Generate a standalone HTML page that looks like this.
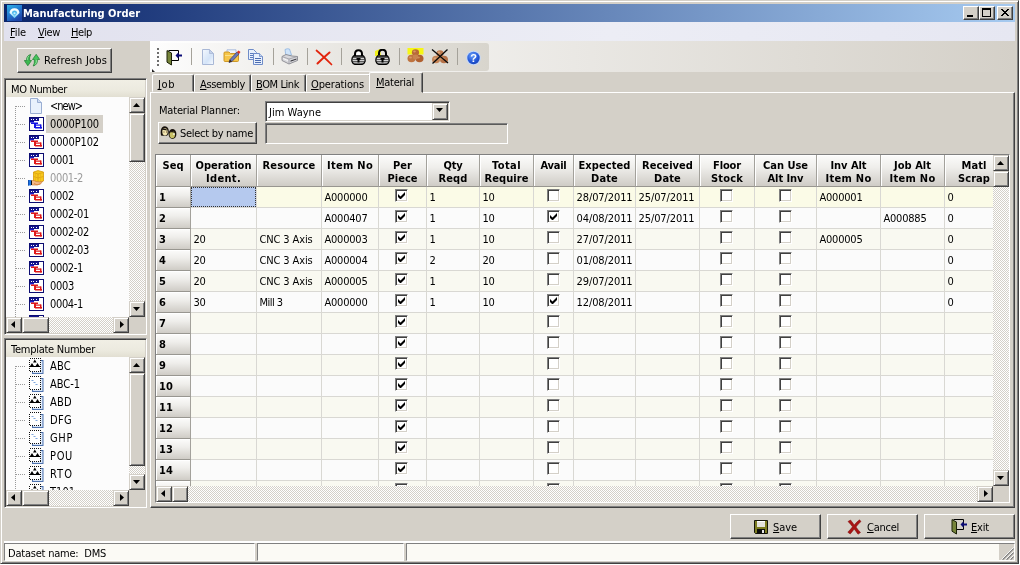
<!DOCTYPE html>
<html><head><meta charset="utf-8"><title>Manufacturing Order</title>
<style>
*{box-sizing:border-box;margin:0;padding:0}
html,body{width:1020px;height:565px;overflow:hidden;background:#fff}
body{position:relative;font:11px "DejaVu Sans Condensed","Liberation Sans",sans-serif;color:#000;-webkit-font-smoothing:antialiased}
#w{position:absolute;left:0;top:0;width:1020px;height:565px;will-change:transform}
.a{position:absolute}
.t{position:absolute;white-space:pre;line-height:13px;height:13px}
.b{font-weight:bold;font-family:"DejaVu Sans Condensed","Liberation Sans",sans-serif;font-size:11px}
u{text-decoration:underline;text-underline-offset:1px;text-decoration-skip-ink:none}
.btn{position:absolute;background:#d4d0c8;border:1px solid;border-color:#fff #404040 #404040 #fff;box-shadow:inset -1px -1px 0 #808080,inset 1px 1px 0 #d4d0c8}
.sunk{position:absolute;border:1px solid;border-color:#808080 #fff #fff #808080;box-shadow:inset 1px 1px 0 #404040,inset -1px -1px 0 #d4d0c8}
.sb{position:absolute;background:#d4d0c8;border:1px solid;border-color:#d4d0c8 #404040 #404040 #d4d0c8;box-shadow:inset 1px 1px 0 #fff,inset -1px -1px 0 #808080}
.trk{position:absolute;background:#d4d0c8 conic-gradient(#fff 25%,#d4d0c8 0 50%,#fff 0 75%,#d4d0c8 0) 0 0/2px 2px}
.hdr{position:absolute;background:linear-gradient(#fcfcfb,#efeeeb 40%,#cfccc6);border-right:1px solid #a3a19b;border-bottom:1px solid #989690;box-shadow:inset 1px 1px 0 #fff}
.hdr span{position:absolute;left:0;right:0;text-align:center;white-space:pre;font:bold 11px/14px "DejaVu Sans Condensed","Liberation Sans",sans-serif}
.cell{position:absolute;border-right:1px solid #d9d8d3;border-bottom:1px solid #d9d8d3;overflow:hidden}
.cell span{position:absolute;left:2.5px;top:4px;white-space:pre;line-height:13px}
.ls{letter-spacing:-0.3px}
.cb{position:absolute;width:13px;height:13px;background:#fff;border:1px solid;border-color:#808080 #fff #fff #808080;box-shadow:inset 1px 1px 0 #404040,inset -1px -1px 0 #d4d0c8}
</style></head>
<body>
<div id="w">
<div class="a" style="left:0;top:0;width:1019px;height:564px;background:#d4d0c8;border:1px solid;border-color:#d4d0c8 #404040 #404040 #d4d0c8;box-shadow:inset 1px 1px 0 #fff,inset -1px -1px 0 #808080"></div>
<div class="a" style="left:4px;top:4px;width:1011px;height:18px;background:linear-gradient(90deg,#0a246a,#a6caf0)"></div>
<svg class="a" style="left:7px;top:5px" width="15" height="16" viewBox="0 0 15 16"><defs><linearGradient id="ig" x1="0" y1="0" x2=".6" y2="1"><stop offset="0" stop-color="#2fb2e6"/><stop offset=".55" stop-color="#2478d0"/><stop offset="1" stop-color="#1c44a8"/></linearGradient><linearGradient id="ih" x1="0" y1="0" x2="0" y2="1"><stop offset="0" stop-color="#ffffff"/><stop offset=".45" stop-color="#e8faff"/><stop offset="1" stop-color="#58c8f4"/></linearGradient></defs><rect width="15" height="16" fill="url(#ig)"/><path d="M2.500 8 Q2.800 3.300 7.500 3.300 Q12.200 3.300 12.500 8 L7.500 13.200 Z" fill="url(#ih)"/><path d="M4.800 8 Q5.200 5.600 7.500 5.600 Q9.800 5.600 10.200 8 L7.500 10.800 Z" fill="#4ab8ee"/><path d="M6.200 8.200 Q6.500 7.200 7.500 7.200 Q8.500 7.200 8.800 8.200 L7.500 9.600Z" fill="#c8f2ff"/></svg>
<div class="t b" style="left:23px;top:7px;color:#fff;">Manufacturing Order</div>
<div class="btn" style="left:963px;top:6px;width:16px;height:14px"></div>
<div class="btn" style="left:979px;top:6px;width:16px;height:14px"></div>
<div class="btn" style="left:997px;top:6px;width:16px;height:14px"></div>
<div class="a" style="left:967px;top:15px;width:6px;height:2px;background:#000"></div>
<div class="a" style="left:982px;top:8px;width:9px;height:9px;border:1px solid #000;border-top-width:2px"></div>
<svg class="a" style="left:1001px;top:9px" width="8" height="7" shape-rendering="crispEdges"><path d="M0 0h2v1h-2z M6 0h2v1h-2z M1 1h2v1h-2z M5 1h2v1h-2z M2 2h4v1h-4z M3 3h2v1h-2z M2 4h4v1h-4z M1 5h2v1h-2z M5 5h2v1h-2z M0 6h2v1h-2z M6 6h2v1h-2z" fill="#000"/></svg>
<div class="a" style="left:4px;top:22px;width:1011px;height:19px;background:linear-gradient(90deg,#e1e1ee,#ecedf5 60%,#e6e7f2)"></div>
<div class="t" style="left:10px;top:26px;letter-spacing:-0.12px;"><u>F</u>ile</div>
<div class="t" style="left:38px;top:26px;letter-spacing:-0.37px;"><u>V</u>iew</div>
<div class="t" style="left:71px;top:26px;letter-spacing:-0.39px;"><u>H</u>elp</div>
<div class="btn" style="left:17px;top:48px;width:95px;height:25px"></div>
<svg class="a" style="left:24px;top:54px" width="16" height="13" viewBox="0 0 16 13"><path d="M.3 6.500 L2.500 6.500 Q2.300 1.500 6.800 .4 Q5.200 2.800 5.600 6.500 L7.500 6.500 L3.800 11.800 Z" fill="#3cb850" stroke="#1f7a30" stroke-width=".7"/><path d="M15.700 5.500 L13.500 5.500 Q13.700 10.800 9.200 12 Q10.800 9.500 10.400 5.500 L8.500 5.500 L12.200 .3 Z" fill="#46c45a" stroke="#1f7a30" stroke-width=".7"/><path d="M3.300 6 Q3.300 3 5 1.800" stroke="#a8e8b0" stroke-width=".7" fill="none"/><path d="M12.700 6 Q12.700 9 11 10.500" stroke="#a8e8b0" stroke-width=".7" fill="none"/></svg>
<div class="t" style="left:44px;top:54px;letter-spacing:0.18px;">Refresh Jobs</div>
<div class="sunk" style="left:4px;top:78px;width:143px;height:257px;background:#fff"></div>
<div class="a" style="left:6px;top:80px;width:139px;height:17px;background:linear-gradient(#f1efe5,#eceadf 60%,#e2dfd2)"></div>
<div class="t" style="left:11px;top:83px;letter-spacing:-0.36px;">MO Number</div>
<div class="a" style="left:6px;top:97px;width:123px;height:220px;overflow:hidden;background:#fcfcfc">
<div class="a" style="left:9px;top:9px;width:1px;height:300px;background:repeating-linear-gradient(#9a9a9a 0 1px,transparent 1px 2px)"></div>
<div class="a" style="left:10px;top:9px;width:9px;height:1px;background:repeating-linear-gradient(90deg,#9a9a9a 0 1px,transparent 1px 2px)"></div>
<svg class="a" style="left:23px;top:1px" width="16" height="16" viewBox="0 0 16 16"><path d="M1.500 .5 H8.500 L12.500 4.500 V15.500 H1.500 Z" fill="#e9f1fc" stroke="#9aaed2"/><path d="M8.500 .5 V4.500 H12.500" fill="#cfdcf2" stroke="#9aaed2"/></svg>
<div class="t" style="left:44px;top:3px;letter-spacing:-1.01px;color:#000;transform:scaleY(1.13);transform-origin:0 10px;">&lt;new&gt;</div>
<div class="a" style="left:10px;top:27px;width:9px;height:1px;background:repeating-linear-gradient(90deg,#9a9a9a 0 1px,transparent 1px 2px)"></div>
<svg class="a" style="left:23px;top:20px" width="15" height="14" viewBox="0 0 15 14"><rect x=".5" y=".5" width="14" height="13" fill="#fff" stroke="#0c0c72"/><rect x="1" y="1" width="9" height="3" fill="#14148c"/><rect x="2" y="2" width="1" height="1" fill="#fff"/><rect x="4" y="2" width="1" height="1" fill="#fff"/><rect x="7" y="2" width="1" height="1" fill="#fff"/><rect x="1" y="4" width="4" height="1.500" fill="#0a0ab4"/><rect x="2" y="5.500" width="7" height="1.500" fill="#1414e6"/><rect x="5" y="6" width="2" height="5" fill="#1414e6"/><rect x="7" y="7.500" width="5" height="1.200" fill="#1414e6"/><rect x="11" y="7.500" width="1.500" height="4" fill="#1414e6"/><rect x="6" y="10" width="7" height="1.500" fill="#1414e6"/></svg>
<div class="a" style="left:40px;top:18px;width:57px;height:18px;background:#d4d0c8"></div>
<div class="t" style="left:44px;top:21px;letter-spacing:-0.13px;color:#000;transform:scaleY(1.13);transform-origin:0 10px;">0000P100</div>
<div class="a" style="left:10px;top:45px;width:9px;height:1px;background:repeating-linear-gradient(90deg,#9a9a9a 0 1px,transparent 1px 2px)"></div>
<svg class="a" style="left:23px;top:38px" width="15" height="14" viewBox="0 0 15 14"><rect x=".5" y=".5" width="14" height="13" fill="#fff" stroke="#0c0c72"/><rect x="1" y="1" width="9" height="3" fill="#14148c"/><rect x="2" y="2" width="1" height="1" fill="#fff"/><rect x="4" y="2" width="1" height="1" fill="#fff"/><rect x="7" y="2" width="1" height="1" fill="#fff"/><rect x="1" y="4" width="4" height="1.500" fill="#1c1ccc"/><rect x="2" y="5.500" width="7" height="1.500" fill="#e01818"/><rect x="5" y="6" width="2" height="5" fill="#e01818"/><rect x="7" y="7.500" width="5" height="1.200" fill="#e01818"/><rect x="11" y="7.500" width="1.500" height="4" fill="#e01818"/><rect x="6" y="10" width="7" height="1.500" fill="#e01818"/></svg>
<div class="t" style="left:44px;top:39px;letter-spacing:-0.13px;color:#000;transform:scaleY(1.13);transform-origin:0 10px;">0000P102</div>
<div class="a" style="left:10px;top:63px;width:9px;height:1px;background:repeating-linear-gradient(90deg,#9a9a9a 0 1px,transparent 1px 2px)"></div>
<svg class="a" style="left:23px;top:56px" width="15" height="14" viewBox="0 0 15 14"><rect x=".5" y=".5" width="14" height="13" fill="#fff" stroke="#0c0c72"/><rect x="1" y="1" width="9" height="3" fill="#14148c"/><rect x="2" y="2" width="1" height="1" fill="#fff"/><rect x="4" y="2" width="1" height="1" fill="#fff"/><rect x="7" y="2" width="1" height="1" fill="#fff"/><rect x="1" y="4" width="4" height="1.500" fill="#1c1ccc"/><rect x="2" y="5.500" width="7" height="1.500" fill="#e01818"/><rect x="5" y="6" width="2" height="5" fill="#e01818"/><rect x="7" y="7.500" width="5" height="1.200" fill="#e01818"/><rect x="11" y="7.500" width="1.500" height="4" fill="#e01818"/><rect x="6" y="10" width="7" height="1.500" fill="#e01818"/></svg>
<div class="t" style="left:44px;top:57px;letter-spacing:-0.3px;color:#000;transform:scaleY(1.13);transform-origin:0 10px;">0001</div>
<div class="a" style="left:10px;top:81px;width:9px;height:1px;background:repeating-linear-gradient(90deg,#9a9a9a 0 1px,transparent 1px 2px)"></div>
<svg class="a" style="left:22px;top:73px" width="17" height="16" viewBox="0 0 17 16"><path d="M5.500 2 L10 .6 L15.500 2 V11 L10 13 L5.500 11Z" fill="#f6c81c" stroke="#d59a0a" stroke-width=".8"/><path d="M10 4 V13 M5.500 6.500 L10 8 L15.500 6.500 M5.500 2.500 L10 4 L15.500 2.500" stroke="#dca010" stroke-width=".8" fill="none"/><path d="M12.500 3.500 V12 M7.500 3.200 V12" stroke="#e8b018" stroke-width=".6"/><path d="M3.500 10.500 H6 L8 11.500 L12 12 L14.500 11.500 L12.500 14 L9 15 H3.500Z" fill="#f2b888" stroke="#c8743a" stroke-width=".6"/><path d="M6 13.500 L9 14.800 L12.500 13.800" stroke="#d8843a" stroke-width=".9" fill="none"/><rect x="0" y="10" width="3" height="5.500" fill="#1c74e4"/><rect x="0" y="10" width="1" height="5.500" fill="#1450b0"/><rect x="3" y="10.500" width="1" height="4.500" fill="#111"/></svg>
<div class="t" style="left:44px;top:75px;letter-spacing:-0.34px;color:#9a9a9a;transform:scaleY(1.13);transform-origin:0 10px;">0001-2</div>
<div class="a" style="left:10px;top:99px;width:9px;height:1px;background:repeating-linear-gradient(90deg,#9a9a9a 0 1px,transparent 1px 2px)"></div>
<svg class="a" style="left:23px;top:92px" width="15" height="14" viewBox="0 0 15 14"><rect x=".5" y=".5" width="14" height="13" fill="#fff" stroke="#0c0c72"/><rect x="1" y="1" width="9" height="3" fill="#14148c"/><rect x="2" y="2" width="1" height="1" fill="#fff"/><rect x="4" y="2" width="1" height="1" fill="#fff"/><rect x="7" y="2" width="1" height="1" fill="#fff"/><rect x="1" y="4" width="4" height="1.500" fill="#1c1ccc"/><rect x="2" y="5.500" width="7" height="1.500" fill="#e01818"/><rect x="5" y="6" width="2" height="5" fill="#e01818"/><rect x="7" y="7.500" width="5" height="1.200" fill="#e01818"/><rect x="11" y="7.500" width="1.500" height="4" fill="#e01818"/><rect x="6" y="10" width="7" height="1.500" fill="#e01818"/></svg>
<div class="t" style="left:44px;top:93px;letter-spacing:-0.3px;color:#000;transform:scaleY(1.13);transform-origin:0 10px;">0002</div>
<div class="a" style="left:10px;top:117px;width:9px;height:1px;background:repeating-linear-gradient(90deg,#9a9a9a 0 1px,transparent 1px 2px)"></div>
<svg class="a" style="left:23px;top:110px" width="15" height="14" viewBox="0 0 15 14"><rect x=".5" y=".5" width="14" height="13" fill="#fff" stroke="#0c0c72"/><rect x="1" y="1" width="9" height="3" fill="#14148c"/><rect x="2" y="2" width="1" height="1" fill="#fff"/><rect x="4" y="2" width="1" height="1" fill="#fff"/><rect x="7" y="2" width="1" height="1" fill="#fff"/><rect x="1" y="4" width="4" height="1.500" fill="#1c1ccc"/><rect x="2" y="5.500" width="7" height="1.500" fill="#e01818"/><rect x="5" y="6" width="2" height="5" fill="#e01818"/><rect x="7" y="7.500" width="5" height="1.200" fill="#e01818"/><rect x="11" y="7.500" width="1.500" height="4" fill="#e01818"/><rect x="6" y="10" width="7" height="1.500" fill="#e01818"/></svg>
<div class="t" style="left:44px;top:111px;letter-spacing:-0.33px;color:#000;transform:scaleY(1.13);transform-origin:0 10px;">0002-01</div>
<div class="a" style="left:10px;top:135px;width:9px;height:1px;background:repeating-linear-gradient(90deg,#9a9a9a 0 1px,transparent 1px 2px)"></div>
<svg class="a" style="left:23px;top:128px" width="15" height="14" viewBox="0 0 15 14"><rect x=".5" y=".5" width="14" height="13" fill="#fff" stroke="#0c0c72"/><rect x="1" y="1" width="9" height="3" fill="#14148c"/><rect x="2" y="2" width="1" height="1" fill="#fff"/><rect x="4" y="2" width="1" height="1" fill="#fff"/><rect x="7" y="2" width="1" height="1" fill="#fff"/><rect x="1" y="4" width="4" height="1.500" fill="#1c1ccc"/><rect x="2" y="5.500" width="7" height="1.500" fill="#e01818"/><rect x="5" y="6" width="2" height="5" fill="#e01818"/><rect x="7" y="7.500" width="5" height="1.200" fill="#e01818"/><rect x="11" y="7.500" width="1.500" height="4" fill="#e01818"/><rect x="6" y="10" width="7" height="1.500" fill="#e01818"/></svg>
<div class="t" style="left:44px;top:129px;letter-spacing:-0.33px;color:#000;transform:scaleY(1.13);transform-origin:0 10px;">0002-02</div>
<div class="a" style="left:10px;top:153px;width:9px;height:1px;background:repeating-linear-gradient(90deg,#9a9a9a 0 1px,transparent 1px 2px)"></div>
<svg class="a" style="left:23px;top:146px" width="15" height="14" viewBox="0 0 15 14"><rect x=".5" y=".5" width="14" height="13" fill="#fff" stroke="#0c0c72"/><rect x="1" y="1" width="9" height="3" fill="#14148c"/><rect x="2" y="2" width="1" height="1" fill="#fff"/><rect x="4" y="2" width="1" height="1" fill="#fff"/><rect x="7" y="2" width="1" height="1" fill="#fff"/><rect x="1" y="4" width="4" height="1.500" fill="#1c1ccc"/><rect x="2" y="5.500" width="7" height="1.500" fill="#e01818"/><rect x="5" y="6" width="2" height="5" fill="#e01818"/><rect x="7" y="7.500" width="5" height="1.200" fill="#e01818"/><rect x="11" y="7.500" width="1.500" height="4" fill="#e01818"/><rect x="6" y="10" width="7" height="1.500" fill="#e01818"/></svg>
<div class="t" style="left:44px;top:147px;letter-spacing:-0.33px;color:#000;transform:scaleY(1.13);transform-origin:0 10px;">0002-03</div>
<div class="a" style="left:10px;top:171px;width:9px;height:1px;background:repeating-linear-gradient(90deg,#9a9a9a 0 1px,transparent 1px 2px)"></div>
<svg class="a" style="left:23px;top:164px" width="15" height="14" viewBox="0 0 15 14"><rect x=".5" y=".5" width="14" height="13" fill="#fff" stroke="#0c0c72"/><rect x="1" y="1" width="9" height="3" fill="#14148c"/><rect x="2" y="2" width="1" height="1" fill="#fff"/><rect x="4" y="2" width="1" height="1" fill="#fff"/><rect x="7" y="2" width="1" height="1" fill="#fff"/><rect x="1" y="4" width="4" height="1.500" fill="#1c1ccc"/><rect x="2" y="5.500" width="7" height="1.500" fill="#e01818"/><rect x="5" y="6" width="2" height="5" fill="#e01818"/><rect x="7" y="7.500" width="5" height="1.200" fill="#e01818"/><rect x="11" y="7.500" width="1.500" height="4" fill="#e01818"/><rect x="6" y="10" width="7" height="1.500" fill="#e01818"/></svg>
<div class="t" style="left:44px;top:165px;letter-spacing:-0.34px;color:#000;transform:scaleY(1.13);transform-origin:0 10px;">0002-1</div>
<div class="a" style="left:10px;top:189px;width:9px;height:1px;background:repeating-linear-gradient(90deg,#9a9a9a 0 1px,transparent 1px 2px)"></div>
<svg class="a" style="left:23px;top:182px" width="15" height="14" viewBox="0 0 15 14"><rect x=".5" y=".5" width="14" height="13" fill="#fff" stroke="#0c0c72"/><rect x="1" y="1" width="9" height="3" fill="#14148c"/><rect x="2" y="2" width="1" height="1" fill="#fff"/><rect x="4" y="2" width="1" height="1" fill="#fff"/><rect x="7" y="2" width="1" height="1" fill="#fff"/><rect x="1" y="4" width="4" height="1.500" fill="#1c1ccc"/><rect x="2" y="5.500" width="7" height="1.500" fill="#e01818"/><rect x="5" y="6" width="2" height="5" fill="#e01818"/><rect x="7" y="7.500" width="5" height="1.200" fill="#e01818"/><rect x="11" y="7.500" width="1.500" height="4" fill="#e01818"/><rect x="6" y="10" width="7" height="1.500" fill="#e01818"/></svg>
<div class="t" style="left:44px;top:183px;letter-spacing:-0.3px;color:#000;transform:scaleY(1.13);transform-origin:0 10px;">0003</div>
<div class="a" style="left:10px;top:207px;width:9px;height:1px;background:repeating-linear-gradient(90deg,#9a9a9a 0 1px,transparent 1px 2px)"></div>
<svg class="a" style="left:23px;top:200px" width="15" height="14" viewBox="0 0 15 14"><rect x=".5" y=".5" width="14" height="13" fill="#fff" stroke="#0c0c72"/><rect x="1" y="1" width="9" height="3" fill="#14148c"/><rect x="2" y="2" width="1" height="1" fill="#fff"/><rect x="4" y="2" width="1" height="1" fill="#fff"/><rect x="7" y="2" width="1" height="1" fill="#fff"/><rect x="1" y="4" width="4" height="1.500" fill="#1c1ccc"/><rect x="2" y="5.500" width="7" height="1.500" fill="#e01818"/><rect x="5" y="6" width="2" height="5" fill="#e01818"/><rect x="7" y="7.500" width="5" height="1.200" fill="#e01818"/><rect x="11" y="7.500" width="1.500" height="4" fill="#e01818"/><rect x="6" y="10" width="7" height="1.500" fill="#e01818"/></svg>
<div class="t" style="left:44px;top:201px;letter-spacing:-0.34px;color:#000;transform:scaleY(1.13);transform-origin:0 10px;">0004-1</div>
<div class="a" style="left:10px;top:225px;width:9px;height:1px;background:repeating-linear-gradient(90deg,#9a9a9a 0 1px,transparent 1px 2px)"></div>
<svg class="a" style="left:23px;top:218px" width="15" height="14" viewBox="0 0 15 14"><rect x=".5" y=".5" width="14" height="13" fill="#fff" stroke="#0c0c72"/><rect x="1" y="1" width="9" height="3" fill="#14148c"/><rect x="2" y="2" width="1" height="1" fill="#fff"/><rect x="4" y="2" width="1" height="1" fill="#fff"/><rect x="7" y="2" width="1" height="1" fill="#fff"/><rect x="1" y="4" width="4" height="1.500" fill="#1c1ccc"/><rect x="2" y="5.500" width="7" height="1.500" fill="#e01818"/><rect x="5" y="6" width="2" height="5" fill="#e01818"/><rect x="7" y="7.500" width="5" height="1.200" fill="#e01818"/><rect x="11" y="7.500" width="1.500" height="4" fill="#e01818"/><rect x="6" y="10" width="7" height="1.500" fill="#e01818"/></svg>
<div class="t" style="left:44px;top:219px;letter-spacing:-0.34px;color:#000;transform:scaleY(1.13);transform-origin:0 10px;">0005-1</div>
</div>
<div class="trk" style="left:129px;top:97px;width:16px;height:220px"></div>
<div class="sb" style="left:129px;top:97px;width:16px;height:16px"></div><svg class="a" style="left:133px;top:103px" width="7" height="4"><polygon points="0,4 7,4 3.5,0" fill="#000"/></svg>
<div class="sb" style="left:129px;top:301px;width:16px;height:16px"></div><svg class="a" style="left:133px;top:307px" width="7" height="4"><polygon points="0,0 7,0 3.5,4" fill="#000"/></svg>
<div class="sb" style="left:129px;top:113px;width:16px;height:49px"></div>
<div class="trk" style="left:6px;top:317px;width:123px;height:16px"></div>
<div class="sb" style="left:6px;top:317px;width:16px;height:16px"></div><svg class="a" style="left:11px;top:321px" width="4" height="7"><polygon points="4,0 4,7 0,3.5" fill="#000"/></svg>
<div class="sb" style="left:113px;top:317px;width:16px;height:16px"></div><svg class="a" style="left:120px;top:321px" width="4" height="7"><polygon points="0,0 0,7 4,3.5" fill="#000"/></svg>
<div class="sb" style="left:22px;top:317px;width:27px;height:16px"></div>
<div class="a" style="left:129px;top:317px;width:16px;height:16px;background:#d4d0c8"></div>
<div class="sunk" style="left:4px;top:338px;width:143px;height:170px;background:#fff"></div>
<div class="a" style="left:6px;top:340px;width:139px;height:17px;background:linear-gradient(#f1efe5,#eceadf 60%,#e2dfd2)"></div>
<div class="t" style="left:11px;top:343px;letter-spacing:-0.26px;">Template Number</div>
<div class="a" style="left:6px;top:357px;width:123px;height:133px;overflow:hidden;background:#fcfcfc">
<div class="a" style="left:9px;top:9px;width:1px;height:300px;background:repeating-linear-gradient(#9a9a9a 0 1px,transparent 1px 2px)"></div>
<div class="a" style="left:10px;top:9px;width:9px;height:1px;background:repeating-linear-gradient(90deg,#9a9a9a 0 1px,transparent 1px 2px)"></div>
<svg class="a" style="left:23px;top:1px" width="15" height="16" viewBox="0 0 15 16"><rect x="3.500" y="2.500" width="10.500" height="13" fill="#cfdff5" stroke="#4e72ae"/><rect x="4.500" y="3.500" width="8.500" height="11" fill="#e4eefb"/><rect x="0" y="0" width="11.500" height="13.500" fill="#fff"/><rect x=".5" y=".5" width="11" height="13" fill="none" stroke="#111" stroke-dasharray="1 1" shape-rendering="crispEdges"/><path d="M4 4.500 L5.800 1.500 L7.600 4.500 Z M.8 8.500 L3 5 L5.200 8.500 Z M6.300 8.500 L8.500 5 L10.700 8.500 Z" fill="#000"/><path d="M.5 8.500 H11" stroke="#000" stroke-width="1"/></svg>
<div class="t" style="left:44px;top:3px;letter-spacing:0.24px;color:#000;transform:scaleY(1.13);transform-origin:0 10px;">ABC</div>
<div class="a" style="left:10px;top:27px;width:9px;height:1px;background:repeating-linear-gradient(90deg,#9a9a9a 0 1px,transparent 1px 2px)"></div>
<svg class="a" style="left:23px;top:19px" width="15" height="16" viewBox="0 0 15 16"><rect x="3.500" y="2.500" width="10.500" height="13" fill="#cfdff5" stroke="#4e72ae"/><rect x="4.500" y="3.500" width="8.500" height="11" fill="#e4eefb"/><rect x="0" y="0" width="11.500" height="13.500" fill="#fff"/><rect x=".5" y=".5" width="11" height="13" fill="none" stroke="#111" stroke-dasharray="1 1" shape-rendering="crispEdges"/><path d="M2.500 4.500 H4.500 M4.500 6.500 H6.500 M6.500 8.500 H8.500" stroke="#7fa6dc" stroke-width="1.200"/></svg>
<div class="t" style="left:44px;top:21px;letter-spacing:-0.03px;color:#000;transform:scaleY(1.13);transform-origin:0 10px;">ABC-1</div>
<div class="a" style="left:10px;top:45px;width:9px;height:1px;background:repeating-linear-gradient(90deg,#9a9a9a 0 1px,transparent 1px 2px)"></div>
<svg class="a" style="left:23px;top:37px" width="15" height="16" viewBox="0 0 15 16"><rect x="3.500" y="2.500" width="10.500" height="13" fill="#cfdff5" stroke="#4e72ae"/><rect x="4.500" y="3.500" width="8.500" height="11" fill="#e4eefb"/><rect x="0" y="0" width="11.500" height="13.500" fill="#fff"/><rect x=".5" y=".5" width="11" height="13" fill="none" stroke="#111" stroke-dasharray="1 1" shape-rendering="crispEdges"/><path d="M4 4.500 L5.800 1.500 L7.600 4.500 Z M.8 8.500 L3 5 L5.200 8.500 Z M6.300 8.500 L8.500 5 L10.700 8.500 Z" fill="#000"/><path d="M.5 8.500 H11" stroke="#000" stroke-width="1"/></svg>
<div class="t" style="left:44px;top:39px;letter-spacing:0.27px;color:#000;transform:scaleY(1.13);transform-origin:0 10px;">ABD</div>
<div class="a" style="left:10px;top:63px;width:9px;height:1px;background:repeating-linear-gradient(90deg,#9a9a9a 0 1px,transparent 1px 2px)"></div>
<svg class="a" style="left:23px;top:55px" width="15" height="16" viewBox="0 0 15 16"><rect x="3.500" y="2.500" width="10.500" height="13" fill="#cfdff5" stroke="#4e72ae"/><rect x="4.500" y="3.500" width="8.500" height="11" fill="#e4eefb"/><rect x="0" y="0" width="11.500" height="13.500" fill="#fff"/><rect x=".5" y=".5" width="11" height="13" fill="none" stroke="#111" stroke-dasharray="1 1" shape-rendering="crispEdges"/><path d="M2.500 4.500 H4.500 M4.500 6.500 H6.500 M6.500 8.500 H8.500" stroke="#7fa6dc" stroke-width="1.200"/></svg>
<div class="t" style="left:44px;top:57px;letter-spacing:0.33px;color:#000;transform:scaleY(1.13);transform-origin:0 10px;">DFG</div>
<div class="a" style="left:10px;top:81px;width:9px;height:1px;background:repeating-linear-gradient(90deg,#9a9a9a 0 1px,transparent 1px 2px)"></div>
<svg class="a" style="left:23px;top:73px" width="15" height="16" viewBox="0 0 15 16"><rect x="3.500" y="2.500" width="10.500" height="13" fill="#cfdff5" stroke="#4e72ae"/><rect x="4.500" y="3.500" width="8.500" height="11" fill="#e4eefb"/><rect x="0" y="0" width="11.500" height="13.500" fill="#fff"/><rect x=".5" y=".5" width="11" height="13" fill="none" stroke="#111" stroke-dasharray="1 1" shape-rendering="crispEdges"/><path d="M2.500 4.500 H4.500 M4.500 6.500 H6.500 M6.500 8.500 H8.500" stroke="#7fa6dc" stroke-width="1.200"/></svg>
<div class="t" style="left:44px;top:75px;letter-spacing:0.64px;color:#000;transform:scaleY(1.13);transform-origin:0 10px;">GHP</div>
<div class="a" style="left:10px;top:99px;width:9px;height:1px;background:repeating-linear-gradient(90deg,#9a9a9a 0 1px,transparent 1px 2px)"></div>
<svg class="a" style="left:23px;top:91px" width="15" height="16" viewBox="0 0 15 16"><rect x="3.500" y="2.500" width="10.500" height="13" fill="#cfdff5" stroke="#4e72ae"/><rect x="4.500" y="3.500" width="8.500" height="11" fill="#e4eefb"/><rect x="0" y="0" width="11.500" height="13.500" fill="#fff"/><rect x=".5" y=".5" width="11" height="13" fill="none" stroke="#111" stroke-dasharray="1 1" shape-rendering="crispEdges"/><path d="M4 4.500 L5.800 1.500 L7.600 4.500 Z M.8 8.500 L3 5 L5.200 8.500 Z M6.300 8.500 L8.500 5 L10.700 8.500 Z" fill="#000"/><path d="M.5 8.500 H11" stroke="#000" stroke-width="1"/></svg>
<div class="t" style="left:44px;top:93px;letter-spacing:0.66px;color:#000;transform:scaleY(1.13);transform-origin:0 10px;">POU</div>
<div class="a" style="left:10px;top:117px;width:9px;height:1px;background:repeating-linear-gradient(90deg,#9a9a9a 0 1px,transparent 1px 2px)"></div>
<svg class="a" style="left:23px;top:109px" width="15" height="16" viewBox="0 0 15 16"><rect x="3.500" y="2.500" width="10.500" height="13" fill="#cfdff5" stroke="#4e72ae"/><rect x="4.500" y="3.500" width="8.500" height="11" fill="#e4eefb"/><rect x="0" y="0" width="11.500" height="13.500" fill="#fff"/><rect x=".5" y=".5" width="11" height="13" fill="none" stroke="#111" stroke-dasharray="1 1" shape-rendering="crispEdges"/><path d="M4 4.500 L5.800 1.500 L7.600 4.500 Z M.8 8.500 L3 5 L5.200 8.500 Z M6.300 8.500 L8.500 5 L10.700 8.500 Z" fill="#000"/><path d="M.5 8.500 H11" stroke="#000" stroke-width="1"/></svg>
<div class="t" style="left:44px;top:111px;letter-spacing:1.03px;color:#000;transform:scaleY(1.13);transform-origin:0 10px;">RTO</div>
<div class="a" style="left:10px;top:135px;width:9px;height:1px;background:repeating-linear-gradient(90deg,#9a9a9a 0 1px,transparent 1px 2px)"></div>
<svg class="a" style="left:23px;top:127px" width="15" height="16" viewBox="0 0 15 16"><rect x="3.500" y="2.500" width="10.500" height="13" fill="#cfdff5" stroke="#4e72ae"/><rect x="4.500" y="3.500" width="8.500" height="11" fill="#e4eefb"/><rect x="0" y="0" width="11.500" height="13.500" fill="#fff"/><rect x=".5" y=".5" width="11" height="13" fill="none" stroke="#111" stroke-dasharray="1 1" shape-rendering="crispEdges"/><path d="M4 4.500 L5.800 1.500 L7.600 4.500 Z M.8 8.500 L3 5 L5.200 8.500 Z M6.300 8.500 L8.500 5 L10.700 8.500 Z" fill="#000"/><path d="M.5 8.500 H11" stroke="#000" stroke-width="1"/></svg>
<div class="t" style="left:44px;top:129px;letter-spacing:0.02px;color:#000;transform:scaleY(1.13);transform-origin:0 10px;">T101</div>
</div>
<div class="trk" style="left:129px;top:357px;width:16px;height:133px"></div>
<div class="sb" style="left:129px;top:357px;width:16px;height:16px"></div><svg class="a" style="left:133px;top:363px" width="7" height="4"><polygon points="0,4 7,4 3.5,0" fill="#000"/></svg>
<div class="sb" style="left:129px;top:474px;width:16px;height:16px"></div><svg class="a" style="left:133px;top:480px" width="7" height="4"><polygon points="0,0 7,0 3.5,4" fill="#000"/></svg>
<div class="sb" style="left:129px;top:373px;width:16px;height:93px"></div>
<div class="trk" style="left:6px;top:490px;width:123px;height:16px"></div>
<div class="sb" style="left:6px;top:490px;width:16px;height:16px"></div><svg class="a" style="left:11px;top:494px" width="4" height="7"><polygon points="4,0 4,7 0,3.5" fill="#000"/></svg>
<div class="sb" style="left:113px;top:490px;width:16px;height:16px"></div><svg class="a" style="left:120px;top:494px" width="4" height="7"><polygon points="0,0 0,7 4,3.5" fill="#000"/></svg>
<div class="sb" style="left:22px;top:490px;width:27px;height:16px"></div>
<div class="a" style="left:129px;top:490px;width:16px;height:16px;background:#d4d0c8"></div>
<div class="a" style="left:150px;top:41px;width:865px;height:31px;background:linear-gradient(90deg,#ffffff,#d4d0c8)"></div>
<div class="a" style="left:150px;top:43px;width:339px;height:28px;border-radius:0 3px 3px 0;background:linear-gradient(90deg,#fefefe,#d8d5cd)"></div>
<div class="a" style="left:157px;top:48px;width:2px;height:18px;background:repeating-linear-gradient(#6e6e6e 0 2px,transparent 2px 4px)"></div>
<div class="a" style="left:191px;top:48px;width:1px;height:17px;background:#a5a29a"></div>
<div class="a" style="left:273px;top:48px;width:1px;height:17px;background:#a5a29a"></div>
<div class="a" style="left:307px;top:48px;width:1px;height:17px;background:#a5a29a"></div>
<div class="a" style="left:341px;top:48px;width:1px;height:17px;background:#a5a29a"></div>
<div class="a" style="left:399px;top:48px;width:1px;height:17px;background:#a5a29a"></div>
<div class="a" style="left:457px;top:48px;width:1px;height:17px;background:#a5a29a"></div>
<svg class="a" style="left:152px;top:69px" width="3" height="3"><polygon points="0,0 3,3 0,3" fill="#222"/></svg>
<svg class="a" style="left:166px;top:50px" width="17" height="16" viewBox="0 0 17 16"><path d="M2.500 .5 H12.500 V10.500 H5.500" fill="none" stroke="#000"/><path d="M1 .6 L5.500 3 V15 L1 12.200 Z" fill="#76843a" stroke="#1c2208" stroke-width="1"/><path d="M9.500 5.500 L12.500 2.300 V4.500 H16 V6.500 H12.500 V8.700 Z" fill="#0c0c78"/></svg>
<svg class="a" style="left:201px;top:49px" width="14" height="16" viewBox="0 0 14 16"><defs><linearGradient id="pg" x1="0" y1="0" x2="1" y2="1"><stop offset="0" stop-color="#f4f8fe"/><stop offset=".6" stop-color="#d4e4f8"/><stop offset="1" stop-color="#f8fbff"/></linearGradient></defs><path d="M1.500 .5 H8.500 L12.500 4.500 V15.500 H1.500 Z" fill="url(#pg)" stroke="#a9b8d6"/><path d="M8.500 .5 V4.500 H12.500 Z" fill="#c4d2ea" stroke="#a9b8d6" stroke-width=".8"/></svg>
<svg class="a" style="left:223px;top:49px" width="18" height="15" viewBox="0 0 18 15"><path d="M4 .8 H13 V8 H4Z" fill="#eef4fc" stroke="#9ab0d8" stroke-width=".8"/><path d="M1 4 Q1 3 2 3 H6 L7.500 4.500 H14.500 Q15.500 4.500 15.500 5.500 V11.500 Q15.500 12.500 14.500 12.500 H2 Q1 12.500 1 11.500Z" fill="#f6c64a" stroke="#c8901c" stroke-width=".9"/><path d="M2 6.500 H15" stroke="#fbe08a" stroke-width="1"/><path d="M6 13.500 L7 10.500 L14 3 L16 5 L9 12.500 Z" fill="#6a78b8" stroke="#3a3f6a" stroke-width=".7"/><path d="M14 3 L15.500 1.500 L17.500 3 L16 5Z" fill="#e03020"/><path d="M6 13.500 L7 10.500 L9 12.500Z" fill="#3a2a1a"/></svg>
<svg class="a" style="left:247px;top:49px" width="17" height="16" viewBox="0 0 17 16"><path d="M1.500 .5 H6.500 L9.500 3.500 V10.500 H1.500Z" fill="#e8f0fc" stroke="#6f8cc8"/><path d="M3 4.500 H8 M3 6.500 H8 M3 8.500 H8" stroke="#4a6cb4" stroke-width=".9"/><path d="M6.500 4.500 H12.500 L15.500 7.500 V15.500 H6.500Z" fill="#e8f0fc" stroke="#6f8cc8"/><path d="M12.500 4.500 V7.500 H15.500" fill="#c6d6f0" stroke="#6f8cc8" stroke-width=".8"/><path d="M8 9.500 H14 M8 11.500 H14 M8 13.500 H14" stroke="#3a5ca8" stroke-width=".9"/></svg>
<svg class="a" style="left:281px;top:48px" width="18" height="17" viewBox="0 0 18 17"><path d="M4 1.500 Q6 .3 8.500 1 L10.500 7 L5 8.500Z" fill="#cfe4fa" stroke="#8fb4e0" stroke-width=".8"/><path d="M1 8.500 L5 6.500 L11 8 L16.500 8.500 V12.500 L8 16 L1 12.500Z" fill="#d8d8dc" stroke="#7c7c84" stroke-width=".8"/><path d="M1 8.500 L8 11 L16.500 8.500" fill="none" stroke="#9a9aa2" stroke-width=".8"/><path d="M8 11 V16" stroke="#9a9aa2" stroke-width=".8"/><path d="M9.500 12.500 L15.500 10.500 V11.500 L9.500 13.800Z" fill="#3a3a40"/><path d="M2 10.500 L7 12.500" stroke="#fff" stroke-width=".8"/></svg>
<svg class="a" style="left:315px;top:49px" width="18" height="17" viewBox="0 0 18 17"><path d="M1.500 1.500 Q8 7 16.500 15.500" stroke="#e2240c" stroke-width="1.700" fill="none" stroke-linecap="round"/><path d="M14.500 3.500 Q8 9 2.500 14.500" stroke="#e2240c" stroke-width="2" fill="none" stroke-linecap="round"/></svg>
<svg class="a" style="left:351px;top:49px" width="15" height="16" viewBox="0 0 15 16"><path d="M4 7.500 V5 Q4 1.200 7.500 1.200 Q11 1.200 11 5 V7.500" fill="none" stroke="#000" stroke-width="2"/><path d="M5.500 7.500 V5 Q5.500 2.800 7.500 2.800 Q9.500 2.800 9.500 5 V7.500" fill="#fff" stroke="none"/><path d="M2.500 7 H12.500 Q14.600 9 14 12.500 Q13 15.500 10 15.500 H5 Q2 15.500 1 12.500 Q.4 9 2.500 7Z" fill="#d2d2d2" stroke="#000" stroke-width="1.300"/><path d="M1.500 8.500 H13.500 M1 10.500 H14 M1.500 12.500 H13.500 M3 14.200 H12" stroke="#3c3c3c" stroke-width=".8"/><rect x="6.500" y="9" width="2" height="4.500" fill="#000"/><rect x="5.500" y="9" width="4" height="1.800" fill="#000"/></svg>
<svg class="a" style="left:375px;top:49px" width="15" height="16" viewBox="0 0 15 16"><path d="M0 2 L5 0 L6 7 L0 7Z" fill="#f2f21a"/><path d="M4 6 V4.500 Q4 .8 7.500 .8 Q11 .8 11 4.500 V7.500" fill="none" stroke="#000" stroke-width="2"/><path d="M2.500 7 H12.500 Q14.600 9 14 12.500 Q13 15.500 10 15.500 H5 Q2 15.500 1 12.500 Q.4 9 2.500 7Z" fill="#d2d2d2" stroke="#000" stroke-width="1.300"/><path d="M1.500 8.500 H13.500 M1 10.500 H14 M1.500 12.500 H13.500 M3 14.200 H12" stroke="#3c3c3c" stroke-width=".8"/><rect x="6.500" y="9" width="2" height="4.500" fill="#000"/><rect x="5.500" y="9" width="4" height="1.800" fill="#000"/></svg>
<svg class="a" style="left:407px;top:48px" width="17" height="15" viewBox="0 0 17 15"><rect x=".5" y="0" width="16" height="6.500" fill="#f6f614"/><ellipse cx="8.500" cy="4.500" rx="3.600" ry="3.300" fill="#b86a38"/><ellipse cx="4.500" cy="10.500" rx="4" ry="3.800" fill="#bf7440"/><ellipse cx="12.500" cy="10.500" rx="4" ry="3.800" fill="#b06030"/><ellipse cx="8.500" cy="9" rx="2.600" ry="2.400" fill="#c88450"/><ellipse cx="7.500" cy="3.500" rx="1.300" ry="1" fill="#d89a68"/><ellipse cx="3.500" cy="9.500" rx="1.400" ry="1.100" fill="#d89a68"/><ellipse cx="11.500" cy="9.500" rx="1.400" ry="1.100" fill="#cf8c58"/></svg>
<svg class="a" style="left:431px;top:48px" width="18" height="16" viewBox="0 0 18 16"><g transform="translate(.5,1)" opacity=".85"><ellipse cx="8.500" cy="4.500" rx="3.600" ry="3.300" fill="#b86a38"/><ellipse cx="4.500" cy="10.500" rx="4" ry="3.800" fill="#bf7440"/><ellipse cx="12.500" cy="10.500" rx="4" ry="3.800" fill="#b06030"/><ellipse cx="8.500" cy="9" rx="2.600" ry="2.400" fill="#c88450"/><ellipse cx="7.500" cy="3.500" rx="1.300" ry="1" fill="#d89a68"/><ellipse cx="3.500" cy="9.500" rx="1.400" ry="1.100" fill="#d89a68"/><ellipse cx="11.500" cy="9.500" rx="1.400" ry="1.100" fill="#cf8c58"/></g><path d="M1 1.500 L17 15 M16.500 1.500 L1.500 15.500" stroke="#0a0a0a" stroke-width="1.300"/></svg>
<svg class="a" style="left:465px;top:50px" width="17" height="16" viewBox="0 0 17 16"><defs><radialGradient id="hg" cx=".4" cy=".3" r=".8"><stop offset="0" stop-color="#6aa0f8"/><stop offset=".6" stop-color="#2458d8"/><stop offset="1" stop-color="#1840b0"/></radialGradient></defs><circle cx="8.500" cy="8" r="7.300" fill="#c4d8f8"/><circle cx="8.500" cy="8" r="6.200" fill="url(#hg)"/><text x="8.500" y="12" text-anchor="middle" font-family="Liberation Sans,sans-serif" font-weight="bold" font-size="11" fill="#fff">?</text></svg>
<div class="a" style="left:150px;top:92px;width:865px;height:416px;border:1px solid;border-color:#fff #404040 #404040 #fff;box-shadow:inset -1px -1px 0 #808080"></div>
<div class="a" style="left:152px;top:74px;width:42px;height:18px;background:#d4d0c8;border:1px solid;border-color:#fff #404040 #d4d0c8 #fff;box-shadow:inset -1px 0 0 #808080;border-radius:2px 2px 0 0"></div>
<div class="t" style="left:158px;top:78px;letter-spacing:0.58px;"><u>J</u>ob</div>
<div class="a" style="left:194px;top:74px;width:57px;height:18px;background:#d4d0c8;border:1px solid;border-color:#fff #404040 #d4d0c8 #fff;box-shadow:inset -1px 0 0 #808080;border-radius:2px 2px 0 0"></div>
<div class="t" style="left:200px;top:78px;letter-spacing:-0.34px;"><u>A</u>ssembly</div>
<div class="a" style="left:251px;top:74px;width:55px;height:18px;background:#d4d0c8;border:1px solid;border-color:#fff #404040 #d4d0c8 #fff;box-shadow:inset -1px 0 0 #808080;border-radius:2px 2px 0 0"></div>
<div class="t" style="left:256px;top:78px;letter-spacing:-0.42px;"><u>B</u>OM Link</div>
<div class="a" style="left:306px;top:74px;width:65px;height:18px;background:#d4d0c8;border:1px solid;border-color:#fff #404040 #d4d0c8 #fff;box-shadow:inset -1px 0 0 #808080;border-radius:2px 2px 0 0"></div>
<div class="t" style="left:311px;top:78px;letter-spacing:-0.14px;"><u>O</u>perations</div>
<div class="a" style="left:369px;top:72px;width:54px;height:21px;background:#d4d0c8;border:1px solid;border-color:#fff #404040 #d4d0c8 #fff;box-shadow:inset -1px 0 0 #808080;border-radius:2px 2px 0 0"></div>
<div class="t" style="left:376px;top:76px;letter-spacing:-0.28px;"><u>M</u>aterial</div>
<div class="t" style="left:159px;top:104px;letter-spacing:-0.18px;">Material Planner:</div>
<div class="sunk" style="left:265px;top:101px;width:185px;height:21px;background:#fff"></div>
<div class="t" style="left:269px;top:106px;letter-spacing:0.02px;">Jim Wayne</div>
<div class="sb" style="left:432px;top:103px;width:16px;height:17px"></div><svg class="a" style="left:436px;top:108px" width="7" height="4"><polygon points="0,0 7,0 3.5,4" fill="#000"/></svg>
<div class="btn" style="left:158px;top:122px;width:99px;height:22px"></div>
<svg class="a" style="left:160px;top:125px" width="17" height="15" viewBox="0 0 17 15"><path d="M1 10.500 Q0 5 2 2.500 Q4.500 .2 7 2 Q9.500 4 8.500 9 L7 10.800 L2.500 10.800Z" fill="#17110c"/><ellipse cx="5" cy="6.800" rx="2.700" ry="3.600" fill="#f2e6b0"/><path d="M2.200 5 Q5 2.500 7.800 5.500 Q5 4.600 2.200 5Z" fill="#17110c"/><ellipse cx="12.500" cy="9" rx="3.900" ry="4.900" fill="#17110c"/><ellipse cx="12.300" cy="9.600" rx="2.700" ry="3.700" fill="#c9c266"/><path d="M9 7.500 Q12.500 4.500 16 8 Q12.500 6.800 9 7.500Z" fill="#17110c"/><rect x="13" y="8.500" width="1.800" height="1.200" fill="#f4f4f4"/><rect x="3.500" y="6.500" width="1" height="1" fill="#6a4a2a"/><rect x="6" y="6.500" width="1" height="1" fill="#6a4a2a"/></svg>
<div class="t" style="left:180px;top:127px;letter-spacing:-0.29px;">Select by name</div>
<div class="a" style="left:265px;top:123px;width:243px;height:21px;border:1px solid;border-color:#808080 #fff #fff #808080;box-shadow:inset 1px 1px 0 #5a5a5a;background:#d4d0c8"></div>
<div class="a" style="left:155px;top:154px;width:855px;height:349px;border:1px solid;border-color:#808080 #fff #fff #808080;background:#fff"></div>
<div class="a" style="left:156px;top:155px;width:837px;height:331px;overflow:hidden;background:#fff">
<div class="hdr" style="left:0px;top:0;width:35px;height:32px">
<span style="top:4px;letter-spacing:0.02px">Seq</span>
</div>
<div class="hdr" style="left:35px;top:0;width:66px;height:32px">
<span style="top:4px;letter-spacing:0.03px">Operation</span>
<span style="top:17px;letter-spacing:0.33px">Ident.</span>
</div>
<div class="hdr" style="left:101px;top:0;width:65px;height:32px">
<span style="top:4px;letter-spacing:0.18px">Resource</span>
</div>
<div class="hdr" style="left:166px;top:0;width:57px;height:32px">
<span style="top:4px;letter-spacing:0.29px">Item No</span>
</div>
<div class="hdr" style="left:223px;top:0;width:48px;height:32px">
<span style="top:4px;letter-spacing:0.05px">Per</span>
<span style="top:17px;letter-spacing:0.01px">Piece</span>
</div>
<div class="hdr" style="left:271px;top:0;width:53px;height:32px">
<span style="top:4px;letter-spacing:-0.2px">Qty</span>
<span style="top:17px;letter-spacing:0.12px">Reqd</span>
</div>
<div class="hdr" style="left:324px;top:0;width:54px;height:32px">
<span style="top:4px;letter-spacing:0.42px">Total</span>
<span style="top:17px;letter-spacing:0.08px">Require</span>
</div>
<div class="hdr" style="left:378px;top:0;width:40px;height:32px">
<span style="top:4px;letter-spacing:-0.24px">Avail</span>
</div>
<div class="hdr" style="left:418px;top:0;width:62px;height:32px">
<span style="top:4px;letter-spacing:0.08px">Expected</span>
<span style="top:17px;letter-spacing:0.16px">Date</span>
</div>
<div class="hdr" style="left:480px;top:0;width:64px;height:32px">
<span style="top:4px;letter-spacing:0.05px">Received</span>
<span style="top:17px;letter-spacing:0.16px">Date</span>
</div>
<div class="hdr" style="left:544px;top:0;width:55px;height:32px">
<span style="top:4px;letter-spacing:-0.13px">Floor</span>
<span style="top:17px;letter-spacing:0.18px">Stock</span>
</div>
<div class="hdr" style="left:599px;top:0;width:62px;height:32px">
<span style="top:4px;letter-spacing:-0.01px">Can Use</span>
<span style="top:17px;letter-spacing:-0.06px">Alt Inv</span>
</div>
<div class="hdr" style="left:661px;top:0;width:64px;height:32px">
<span style="top:4px;letter-spacing:-0.06px">Inv Alt</span>
<span style="top:17px;letter-spacing:0.29px">Item No</span>
</div>
<div class="hdr" style="left:725px;top:0;width:64px;height:32px">
<span style="top:4px;letter-spacing:0.03px">Job Alt</span>
<span style="top:17px;letter-spacing:0.29px">Item No</span>
</div>
<div class="hdr" style="left:789px;top:0;width:59px;height:32px">
<span style="top:4px;letter-spacing:0.09px">Matl</span>
<span style="top:17px;letter-spacing:0.07px">Scrap</span>
</div>
<div class="hdr" style="left:0;top:32px;width:35px;height:21px"><span style="text-align:left;left:3px;top:4px;letter-spacing:0.11px">1</span></div>
<div class="cell" style="left:35px;top:32px;width:66px;height:21px;background:#fbfbe7;box-shadow:none;">
<div class="a" style="left:0;top:0;right:0;bottom:0;background:#b5c9ee;border:1px dotted #333"></div>
</div>
<div class="cell" style="left:101px;top:32px;width:65px;height:21px;background:#fbfbe7;">
</div>
<div class="cell" style="left:166px;top:32px;width:57px;height:21px;background:#fbfbe7;">
<span style="letter-spacing:-0.22px">A000000</span>
</div>
<div class="cell" style="left:223px;top:32px;width:48px;height:21px;background:#fbfbe7;">
<div class="cb" style="left:16px;top:2px"><svg class="a" style="left:2px;top:2px" width="7" height="7" viewBox="0 0 7 7"><path d="M0 2 L2.500 4.500 L7 0 V3 L2.500 7.500 L0 5 Z" fill="#000"/></svg></div>
</div>
<div class="cell" style="left:271px;top:32px;width:53px;height:21px;background:#fbfbe7;">
<span style="letter-spacing:-0.3px">1</span>
</div>
<div class="cell" style="left:324px;top:32px;width:54px;height:21px;background:#fbfbe7;">
<span style="letter-spacing:-0.3px">10</span>
</div>
<div class="cell" style="left:378px;top:32px;width:40px;height:21px;background:#fbfbe7;">
<div class="cb" style="left:13px;top:2px"></div>
</div>
<div class="cell" style="left:418px;top:32px;width:62px;height:21px;background:#fbfbe7;">
<span style="letter-spacing:-0.1px">28/07/2011</span>
</div>
<div class="cell" style="left:480px;top:32px;width:64px;height:21px;background:#fbfbe7;">
<span style="letter-spacing:-0.1px">25/07/2011</span>
</div>
<div class="cell" style="left:544px;top:32px;width:55px;height:21px;background:#fbfbe7;">
<div class="cb" style="left:20px;top:2px"></div>
</div>
<div class="cell" style="left:599px;top:32px;width:62px;height:21px;background:#fbfbe7;">
<div class="cb" style="left:24px;top:2px"></div>
</div>
<div class="cell" style="left:661px;top:32px;width:64px;height:21px;background:#fbfbe7;">
<span style="letter-spacing:-0.22px">A000001</span>
</div>
<div class="cell" style="left:725px;top:32px;width:64px;height:21px;background:#fbfbe7;">
</div>
<div class="cell" style="left:789px;top:32px;width:59px;height:21px;background:#fbfbe7;">
<span style="letter-spacing:-0.3px">0</span>
</div>
<div class="hdr" style="left:0;top:53px;width:35px;height:21px"><span style="text-align:left;left:3px;top:4px;letter-spacing:0.11px">2</span></div>
<div class="cell" style="left:35px;top:53px;width:66px;height:21px;background:#fbfbfb;">
</div>
<div class="cell" style="left:101px;top:53px;width:65px;height:21px;background:#fbfbfb;">
</div>
<div class="cell" style="left:166px;top:53px;width:57px;height:21px;background:#fbfbfb;">
<span style="letter-spacing:-0.22px">A000407</span>
</div>
<div class="cell" style="left:223px;top:53px;width:48px;height:21px;background:#fbfbfb;">
<div class="cb" style="left:16px;top:2px"><svg class="a" style="left:2px;top:2px" width="7" height="7" viewBox="0 0 7 7"><path d="M0 2 L2.500 4.500 L7 0 V3 L2.500 7.500 L0 5 Z" fill="#000"/></svg></div>
</div>
<div class="cell" style="left:271px;top:53px;width:53px;height:21px;background:#fbfbfb;">
<span style="letter-spacing:-0.3px">1</span>
</div>
<div class="cell" style="left:324px;top:53px;width:54px;height:21px;background:#fbfbfb;">
<span style="letter-spacing:-0.3px">10</span>
</div>
<div class="cell" style="left:378px;top:53px;width:40px;height:21px;background:#fbfbfb;">
<div class="cb" style="left:13px;top:2px"><svg class="a" style="left:2px;top:2px" width="7" height="7" viewBox="0 0 7 7"><path d="M0 2 L2.500 4.500 L7 0 V3 L2.500 7.500 L0 5 Z" fill="#000"/></svg></div>
</div>
<div class="cell" style="left:418px;top:53px;width:62px;height:21px;background:#fbfbfb;">
<span style="letter-spacing:-0.1px">04/08/2011</span>
</div>
<div class="cell" style="left:480px;top:53px;width:64px;height:21px;background:#fbfbfb;">
<span style="letter-spacing:-0.1px">25/07/2011</span>
</div>
<div class="cell" style="left:544px;top:53px;width:55px;height:21px;background:#fbfbfb;">
<div class="cb" style="left:20px;top:2px"></div>
</div>
<div class="cell" style="left:599px;top:53px;width:62px;height:21px;background:#fbfbfb;">
<div class="cb" style="left:24px;top:2px"></div>
</div>
<div class="cell" style="left:661px;top:53px;width:64px;height:21px;background:#fbfbfb;">
</div>
<div class="cell" style="left:725px;top:53px;width:64px;height:21px;background:#fbfbfb;">
<span style="letter-spacing:-0.22px">A000885</span>
</div>
<div class="cell" style="left:789px;top:53px;width:59px;height:21px;background:#fbfbfb;">
<span style="letter-spacing:-0.3px">0</span>
</div>
<div class="hdr" style="left:0;top:74px;width:35px;height:21px"><span style="text-align:left;left:3px;top:4px;letter-spacing:0.11px">3</span></div>
<div class="cell" style="left:35px;top:74px;width:66px;height:21px;background:#f9f9f1;">
<span style="letter-spacing:-0.3px">20</span>
</div>
<div class="cell" style="left:101px;top:74px;width:65px;height:21px;background:#f9f9f1;">
<span style="letter-spacing:-0.13px">CNC 3 Axis</span>
</div>
<div class="cell" style="left:166px;top:74px;width:57px;height:21px;background:#f9f9f1;">
<span style="letter-spacing:-0.22px">A000003</span>
</div>
<div class="cell" style="left:223px;top:74px;width:48px;height:21px;background:#f9f9f1;">
<div class="cb" style="left:16px;top:2px"><svg class="a" style="left:2px;top:2px" width="7" height="7" viewBox="0 0 7 7"><path d="M0 2 L2.500 4.500 L7 0 V3 L2.500 7.500 L0 5 Z" fill="#000"/></svg></div>
</div>
<div class="cell" style="left:271px;top:74px;width:53px;height:21px;background:#f9f9f1;">
<span style="letter-spacing:-0.3px">1</span>
</div>
<div class="cell" style="left:324px;top:74px;width:54px;height:21px;background:#f9f9f1;">
<span style="letter-spacing:-0.3px">10</span>
</div>
<div class="cell" style="left:378px;top:74px;width:40px;height:21px;background:#f9f9f1;">
<div class="cb" style="left:13px;top:2px"></div>
</div>
<div class="cell" style="left:418px;top:74px;width:62px;height:21px;background:#f9f9f1;">
<span style="letter-spacing:-0.1px">27/07/2011</span>
</div>
<div class="cell" style="left:480px;top:74px;width:64px;height:21px;background:#f9f9f1;">
</div>
<div class="cell" style="left:544px;top:74px;width:55px;height:21px;background:#f9f9f1;">
<div class="cb" style="left:20px;top:2px"></div>
</div>
<div class="cell" style="left:599px;top:74px;width:62px;height:21px;background:#f9f9f1;">
<div class="cb" style="left:24px;top:2px"></div>
</div>
<div class="cell" style="left:661px;top:74px;width:64px;height:21px;background:#f9f9f1;">
<span style="letter-spacing:-0.22px">A000005</span>
</div>
<div class="cell" style="left:725px;top:74px;width:64px;height:21px;background:#f9f9f1;">
</div>
<div class="cell" style="left:789px;top:74px;width:59px;height:21px;background:#f9f9f1;">
<span style="letter-spacing:-0.3px">0</span>
</div>
<div class="hdr" style="left:0;top:95px;width:35px;height:21px"><span style="text-align:left;left:3px;top:4px;letter-spacing:0.11px">4</span></div>
<div class="cell" style="left:35px;top:95px;width:66px;height:21px;background:#fbfbfb;">
<span style="letter-spacing:-0.3px">20</span>
</div>
<div class="cell" style="left:101px;top:95px;width:65px;height:21px;background:#fbfbfb;">
<span style="letter-spacing:-0.13px">CNC 3 Axis</span>
</div>
<div class="cell" style="left:166px;top:95px;width:57px;height:21px;background:#fbfbfb;">
<span style="letter-spacing:-0.22px">A000004</span>
</div>
<div class="cell" style="left:223px;top:95px;width:48px;height:21px;background:#fbfbfb;">
<div class="cb" style="left:16px;top:2px"><svg class="a" style="left:2px;top:2px" width="7" height="7" viewBox="0 0 7 7"><path d="M0 2 L2.500 4.500 L7 0 V3 L2.500 7.500 L0 5 Z" fill="#000"/></svg></div>
</div>
<div class="cell" style="left:271px;top:95px;width:53px;height:21px;background:#fbfbfb;">
<span style="letter-spacing:-0.3px">2</span>
</div>
<div class="cell" style="left:324px;top:95px;width:54px;height:21px;background:#fbfbfb;">
<span style="letter-spacing:-0.3px">20</span>
</div>
<div class="cell" style="left:378px;top:95px;width:40px;height:21px;background:#fbfbfb;">
<div class="cb" style="left:13px;top:2px"></div>
</div>
<div class="cell" style="left:418px;top:95px;width:62px;height:21px;background:#fbfbfb;">
<span style="letter-spacing:-0.1px">01/08/2011</span>
</div>
<div class="cell" style="left:480px;top:95px;width:64px;height:21px;background:#fbfbfb;">
</div>
<div class="cell" style="left:544px;top:95px;width:55px;height:21px;background:#fbfbfb;">
<div class="cb" style="left:20px;top:2px"></div>
</div>
<div class="cell" style="left:599px;top:95px;width:62px;height:21px;background:#fbfbfb;">
<div class="cb" style="left:24px;top:2px"></div>
</div>
<div class="cell" style="left:661px;top:95px;width:64px;height:21px;background:#fbfbfb;">
</div>
<div class="cell" style="left:725px;top:95px;width:64px;height:21px;background:#fbfbfb;">
</div>
<div class="cell" style="left:789px;top:95px;width:59px;height:21px;background:#fbfbfb;">
<span style="letter-spacing:-0.3px">0</span>
</div>
<div class="hdr" style="left:0;top:116px;width:35px;height:21px"><span style="text-align:left;left:3px;top:4px;letter-spacing:0.11px">5</span></div>
<div class="cell" style="left:35px;top:116px;width:66px;height:21px;background:#f9f9f1;">
<span style="letter-spacing:-0.3px">20</span>
</div>
<div class="cell" style="left:101px;top:116px;width:65px;height:21px;background:#f9f9f1;">
<span style="letter-spacing:-0.13px">CNC 3 Axis</span>
</div>
<div class="cell" style="left:166px;top:116px;width:57px;height:21px;background:#f9f9f1;">
<span style="letter-spacing:-0.22px">A000005</span>
</div>
<div class="cell" style="left:223px;top:116px;width:48px;height:21px;background:#f9f9f1;">
<div class="cb" style="left:16px;top:2px"><svg class="a" style="left:2px;top:2px" width="7" height="7" viewBox="0 0 7 7"><path d="M0 2 L2.500 4.500 L7 0 V3 L2.500 7.500 L0 5 Z" fill="#000"/></svg></div>
</div>
<div class="cell" style="left:271px;top:116px;width:53px;height:21px;background:#f9f9f1;">
<span style="letter-spacing:-0.3px">1</span>
</div>
<div class="cell" style="left:324px;top:116px;width:54px;height:21px;background:#f9f9f1;">
<span style="letter-spacing:-0.3px">10</span>
</div>
<div class="cell" style="left:378px;top:116px;width:40px;height:21px;background:#f9f9f1;">
<div class="cb" style="left:13px;top:2px"></div>
</div>
<div class="cell" style="left:418px;top:116px;width:62px;height:21px;background:#f9f9f1;">
<span style="letter-spacing:-0.1px">29/07/2011</span>
</div>
<div class="cell" style="left:480px;top:116px;width:64px;height:21px;background:#f9f9f1;">
</div>
<div class="cell" style="left:544px;top:116px;width:55px;height:21px;background:#f9f9f1;">
<div class="cb" style="left:20px;top:2px"></div>
</div>
<div class="cell" style="left:599px;top:116px;width:62px;height:21px;background:#f9f9f1;">
<div class="cb" style="left:24px;top:2px"></div>
</div>
<div class="cell" style="left:661px;top:116px;width:64px;height:21px;background:#f9f9f1;">
</div>
<div class="cell" style="left:725px;top:116px;width:64px;height:21px;background:#f9f9f1;">
</div>
<div class="cell" style="left:789px;top:116px;width:59px;height:21px;background:#f9f9f1;">
<span style="letter-spacing:-0.3px">0</span>
</div>
<div class="hdr" style="left:0;top:137px;width:35px;height:21px"><span style="text-align:left;left:3px;top:4px;letter-spacing:0.11px">6</span></div>
<div class="cell" style="left:35px;top:137px;width:66px;height:21px;background:#fbfbfb;">
<span style="letter-spacing:-0.3px">30</span>
</div>
<div class="cell" style="left:101px;top:137px;width:65px;height:21px;background:#fbfbfb;">
<span style="letter-spacing:-0.54px">Mill 3</span>
</div>
<div class="cell" style="left:166px;top:137px;width:57px;height:21px;background:#fbfbfb;">
<span style="letter-spacing:-0.22px">A000000</span>
</div>
<div class="cell" style="left:223px;top:137px;width:48px;height:21px;background:#fbfbfb;">
<div class="cb" style="left:16px;top:2px"><svg class="a" style="left:2px;top:2px" width="7" height="7" viewBox="0 0 7 7"><path d="M0 2 L2.500 4.500 L7 0 V3 L2.500 7.500 L0 5 Z" fill="#000"/></svg></div>
</div>
<div class="cell" style="left:271px;top:137px;width:53px;height:21px;background:#fbfbfb;">
<span style="letter-spacing:-0.3px">1</span>
</div>
<div class="cell" style="left:324px;top:137px;width:54px;height:21px;background:#fbfbfb;">
<span style="letter-spacing:-0.3px">10</span>
</div>
<div class="cell" style="left:378px;top:137px;width:40px;height:21px;background:#fbfbfb;">
<div class="cb" style="left:13px;top:2px"><svg class="a" style="left:2px;top:2px" width="7" height="7" viewBox="0 0 7 7"><path d="M0 2 L2.500 4.500 L7 0 V3 L2.500 7.500 L0 5 Z" fill="#000"/></svg></div>
</div>
<div class="cell" style="left:418px;top:137px;width:62px;height:21px;background:#fbfbfb;">
<span style="letter-spacing:-0.1px">12/08/2011</span>
</div>
<div class="cell" style="left:480px;top:137px;width:64px;height:21px;background:#fbfbfb;">
</div>
<div class="cell" style="left:544px;top:137px;width:55px;height:21px;background:#fbfbfb;">
<div class="cb" style="left:20px;top:2px"></div>
</div>
<div class="cell" style="left:599px;top:137px;width:62px;height:21px;background:#fbfbfb;">
<div class="cb" style="left:24px;top:2px"></div>
</div>
<div class="cell" style="left:661px;top:137px;width:64px;height:21px;background:#fbfbfb;">
</div>
<div class="cell" style="left:725px;top:137px;width:64px;height:21px;background:#fbfbfb;">
</div>
<div class="cell" style="left:789px;top:137px;width:59px;height:21px;background:#fbfbfb;">
<span style="letter-spacing:-0.3px">0</span>
</div>
<div class="hdr" style="left:0;top:158px;width:35px;height:21px"><span style="text-align:left;left:3px;top:4px;letter-spacing:0.11px">7</span></div>
<div class="cell" style="left:35px;top:158px;width:66px;height:21px;background:#f9f9f1;">
</div>
<div class="cell" style="left:101px;top:158px;width:65px;height:21px;background:#f9f9f1;">
</div>
<div class="cell" style="left:166px;top:158px;width:57px;height:21px;background:#f9f9f1;">
</div>
<div class="cell" style="left:223px;top:158px;width:48px;height:21px;background:#f9f9f1;">
<div class="cb" style="left:16px;top:2px"><svg class="a" style="left:2px;top:2px" width="7" height="7" viewBox="0 0 7 7"><path d="M0 2 L2.500 4.500 L7 0 V3 L2.500 7.500 L0 5 Z" fill="#000"/></svg></div>
</div>
<div class="cell" style="left:271px;top:158px;width:53px;height:21px;background:#f9f9f1;">
</div>
<div class="cell" style="left:324px;top:158px;width:54px;height:21px;background:#f9f9f1;">
</div>
<div class="cell" style="left:378px;top:158px;width:40px;height:21px;background:#f9f9f1;">
<div class="cb" style="left:13px;top:2px"></div>
</div>
<div class="cell" style="left:418px;top:158px;width:62px;height:21px;background:#f9f9f1;">
</div>
<div class="cell" style="left:480px;top:158px;width:64px;height:21px;background:#f9f9f1;">
</div>
<div class="cell" style="left:544px;top:158px;width:55px;height:21px;background:#f9f9f1;">
<div class="cb" style="left:20px;top:2px"></div>
</div>
<div class="cell" style="left:599px;top:158px;width:62px;height:21px;background:#f9f9f1;">
<div class="cb" style="left:24px;top:2px"></div>
</div>
<div class="cell" style="left:661px;top:158px;width:64px;height:21px;background:#f9f9f1;">
</div>
<div class="cell" style="left:725px;top:158px;width:64px;height:21px;background:#f9f9f1;">
</div>
<div class="cell" style="left:789px;top:158px;width:59px;height:21px;background:#f9f9f1;">
</div>
<div class="hdr" style="left:0;top:179px;width:35px;height:21px"><span style="text-align:left;left:3px;top:4px;letter-spacing:0.11px">8</span></div>
<div class="cell" style="left:35px;top:179px;width:66px;height:21px;background:#fbfbfb;">
</div>
<div class="cell" style="left:101px;top:179px;width:65px;height:21px;background:#fbfbfb;">
</div>
<div class="cell" style="left:166px;top:179px;width:57px;height:21px;background:#fbfbfb;">
</div>
<div class="cell" style="left:223px;top:179px;width:48px;height:21px;background:#fbfbfb;">
<div class="cb" style="left:16px;top:2px"><svg class="a" style="left:2px;top:2px" width="7" height="7" viewBox="0 0 7 7"><path d="M0 2 L2.500 4.500 L7 0 V3 L2.500 7.500 L0 5 Z" fill="#000"/></svg></div>
</div>
<div class="cell" style="left:271px;top:179px;width:53px;height:21px;background:#fbfbfb;">
</div>
<div class="cell" style="left:324px;top:179px;width:54px;height:21px;background:#fbfbfb;">
</div>
<div class="cell" style="left:378px;top:179px;width:40px;height:21px;background:#fbfbfb;">
<div class="cb" style="left:13px;top:2px"></div>
</div>
<div class="cell" style="left:418px;top:179px;width:62px;height:21px;background:#fbfbfb;">
</div>
<div class="cell" style="left:480px;top:179px;width:64px;height:21px;background:#fbfbfb;">
</div>
<div class="cell" style="left:544px;top:179px;width:55px;height:21px;background:#fbfbfb;">
<div class="cb" style="left:20px;top:2px"></div>
</div>
<div class="cell" style="left:599px;top:179px;width:62px;height:21px;background:#fbfbfb;">
<div class="cb" style="left:24px;top:2px"></div>
</div>
<div class="cell" style="left:661px;top:179px;width:64px;height:21px;background:#fbfbfb;">
</div>
<div class="cell" style="left:725px;top:179px;width:64px;height:21px;background:#fbfbfb;">
</div>
<div class="cell" style="left:789px;top:179px;width:59px;height:21px;background:#fbfbfb;">
</div>
<div class="hdr" style="left:0;top:200px;width:35px;height:21px"><span style="text-align:left;left:3px;top:4px;letter-spacing:0.11px">9</span></div>
<div class="cell" style="left:35px;top:200px;width:66px;height:21px;background:#f9f9f1;">
</div>
<div class="cell" style="left:101px;top:200px;width:65px;height:21px;background:#f9f9f1;">
</div>
<div class="cell" style="left:166px;top:200px;width:57px;height:21px;background:#f9f9f1;">
</div>
<div class="cell" style="left:223px;top:200px;width:48px;height:21px;background:#f9f9f1;">
<div class="cb" style="left:16px;top:2px"><svg class="a" style="left:2px;top:2px" width="7" height="7" viewBox="0 0 7 7"><path d="M0 2 L2.500 4.500 L7 0 V3 L2.500 7.500 L0 5 Z" fill="#000"/></svg></div>
</div>
<div class="cell" style="left:271px;top:200px;width:53px;height:21px;background:#f9f9f1;">
</div>
<div class="cell" style="left:324px;top:200px;width:54px;height:21px;background:#f9f9f1;">
</div>
<div class="cell" style="left:378px;top:200px;width:40px;height:21px;background:#f9f9f1;">
<div class="cb" style="left:13px;top:2px"></div>
</div>
<div class="cell" style="left:418px;top:200px;width:62px;height:21px;background:#f9f9f1;">
</div>
<div class="cell" style="left:480px;top:200px;width:64px;height:21px;background:#f9f9f1;">
</div>
<div class="cell" style="left:544px;top:200px;width:55px;height:21px;background:#f9f9f1;">
<div class="cb" style="left:20px;top:2px"></div>
</div>
<div class="cell" style="left:599px;top:200px;width:62px;height:21px;background:#f9f9f1;">
<div class="cb" style="left:24px;top:2px"></div>
</div>
<div class="cell" style="left:661px;top:200px;width:64px;height:21px;background:#f9f9f1;">
</div>
<div class="cell" style="left:725px;top:200px;width:64px;height:21px;background:#f9f9f1;">
</div>
<div class="cell" style="left:789px;top:200px;width:59px;height:21px;background:#f9f9f1;">
</div>
<div class="hdr" style="left:0;top:221px;width:35px;height:21px"><span style="text-align:left;left:3px;top:4px;letter-spacing:0.11px">10</span></div>
<div class="cell" style="left:35px;top:221px;width:66px;height:21px;background:#fbfbfb;">
</div>
<div class="cell" style="left:101px;top:221px;width:65px;height:21px;background:#fbfbfb;">
</div>
<div class="cell" style="left:166px;top:221px;width:57px;height:21px;background:#fbfbfb;">
</div>
<div class="cell" style="left:223px;top:221px;width:48px;height:21px;background:#fbfbfb;">
<div class="cb" style="left:16px;top:2px"><svg class="a" style="left:2px;top:2px" width="7" height="7" viewBox="0 0 7 7"><path d="M0 2 L2.500 4.500 L7 0 V3 L2.500 7.500 L0 5 Z" fill="#000"/></svg></div>
</div>
<div class="cell" style="left:271px;top:221px;width:53px;height:21px;background:#fbfbfb;">
</div>
<div class="cell" style="left:324px;top:221px;width:54px;height:21px;background:#fbfbfb;">
</div>
<div class="cell" style="left:378px;top:221px;width:40px;height:21px;background:#fbfbfb;">
<div class="cb" style="left:13px;top:2px"></div>
</div>
<div class="cell" style="left:418px;top:221px;width:62px;height:21px;background:#fbfbfb;">
</div>
<div class="cell" style="left:480px;top:221px;width:64px;height:21px;background:#fbfbfb;">
</div>
<div class="cell" style="left:544px;top:221px;width:55px;height:21px;background:#fbfbfb;">
<div class="cb" style="left:20px;top:2px"></div>
</div>
<div class="cell" style="left:599px;top:221px;width:62px;height:21px;background:#fbfbfb;">
<div class="cb" style="left:24px;top:2px"></div>
</div>
<div class="cell" style="left:661px;top:221px;width:64px;height:21px;background:#fbfbfb;">
</div>
<div class="cell" style="left:725px;top:221px;width:64px;height:21px;background:#fbfbfb;">
</div>
<div class="cell" style="left:789px;top:221px;width:59px;height:21px;background:#fbfbfb;">
</div>
<div class="hdr" style="left:0;top:242px;width:35px;height:21px"><span style="text-align:left;left:3px;top:4px;letter-spacing:0.11px">11</span></div>
<div class="cell" style="left:35px;top:242px;width:66px;height:21px;background:#f9f9f1;">
</div>
<div class="cell" style="left:101px;top:242px;width:65px;height:21px;background:#f9f9f1;">
</div>
<div class="cell" style="left:166px;top:242px;width:57px;height:21px;background:#f9f9f1;">
</div>
<div class="cell" style="left:223px;top:242px;width:48px;height:21px;background:#f9f9f1;">
<div class="cb" style="left:16px;top:2px"><svg class="a" style="left:2px;top:2px" width="7" height="7" viewBox="0 0 7 7"><path d="M0 2 L2.500 4.500 L7 0 V3 L2.500 7.500 L0 5 Z" fill="#000"/></svg></div>
</div>
<div class="cell" style="left:271px;top:242px;width:53px;height:21px;background:#f9f9f1;">
</div>
<div class="cell" style="left:324px;top:242px;width:54px;height:21px;background:#f9f9f1;">
</div>
<div class="cell" style="left:378px;top:242px;width:40px;height:21px;background:#f9f9f1;">
<div class="cb" style="left:13px;top:2px"></div>
</div>
<div class="cell" style="left:418px;top:242px;width:62px;height:21px;background:#f9f9f1;">
</div>
<div class="cell" style="left:480px;top:242px;width:64px;height:21px;background:#f9f9f1;">
</div>
<div class="cell" style="left:544px;top:242px;width:55px;height:21px;background:#f9f9f1;">
<div class="cb" style="left:20px;top:2px"></div>
</div>
<div class="cell" style="left:599px;top:242px;width:62px;height:21px;background:#f9f9f1;">
<div class="cb" style="left:24px;top:2px"></div>
</div>
<div class="cell" style="left:661px;top:242px;width:64px;height:21px;background:#f9f9f1;">
</div>
<div class="cell" style="left:725px;top:242px;width:64px;height:21px;background:#f9f9f1;">
</div>
<div class="cell" style="left:789px;top:242px;width:59px;height:21px;background:#f9f9f1;">
</div>
<div class="hdr" style="left:0;top:263px;width:35px;height:21px"><span style="text-align:left;left:3px;top:4px;letter-spacing:0.11px">12</span></div>
<div class="cell" style="left:35px;top:263px;width:66px;height:21px;background:#fbfbfb;">
</div>
<div class="cell" style="left:101px;top:263px;width:65px;height:21px;background:#fbfbfb;">
</div>
<div class="cell" style="left:166px;top:263px;width:57px;height:21px;background:#fbfbfb;">
</div>
<div class="cell" style="left:223px;top:263px;width:48px;height:21px;background:#fbfbfb;">
<div class="cb" style="left:16px;top:2px"><svg class="a" style="left:2px;top:2px" width="7" height="7" viewBox="0 0 7 7"><path d="M0 2 L2.500 4.500 L7 0 V3 L2.500 7.500 L0 5 Z" fill="#000"/></svg></div>
</div>
<div class="cell" style="left:271px;top:263px;width:53px;height:21px;background:#fbfbfb;">
</div>
<div class="cell" style="left:324px;top:263px;width:54px;height:21px;background:#fbfbfb;">
</div>
<div class="cell" style="left:378px;top:263px;width:40px;height:21px;background:#fbfbfb;">
<div class="cb" style="left:13px;top:2px"></div>
</div>
<div class="cell" style="left:418px;top:263px;width:62px;height:21px;background:#fbfbfb;">
</div>
<div class="cell" style="left:480px;top:263px;width:64px;height:21px;background:#fbfbfb;">
</div>
<div class="cell" style="left:544px;top:263px;width:55px;height:21px;background:#fbfbfb;">
<div class="cb" style="left:20px;top:2px"></div>
</div>
<div class="cell" style="left:599px;top:263px;width:62px;height:21px;background:#fbfbfb;">
<div class="cb" style="left:24px;top:2px"></div>
</div>
<div class="cell" style="left:661px;top:263px;width:64px;height:21px;background:#fbfbfb;">
</div>
<div class="cell" style="left:725px;top:263px;width:64px;height:21px;background:#fbfbfb;">
</div>
<div class="cell" style="left:789px;top:263px;width:59px;height:21px;background:#fbfbfb;">
</div>
<div class="hdr" style="left:0;top:284px;width:35px;height:21px"><span style="text-align:left;left:3px;top:4px;letter-spacing:0.11px">13</span></div>
<div class="cell" style="left:35px;top:284px;width:66px;height:21px;background:#f9f9f1;">
</div>
<div class="cell" style="left:101px;top:284px;width:65px;height:21px;background:#f9f9f1;">
</div>
<div class="cell" style="left:166px;top:284px;width:57px;height:21px;background:#f9f9f1;">
</div>
<div class="cell" style="left:223px;top:284px;width:48px;height:21px;background:#f9f9f1;">
<div class="cb" style="left:16px;top:2px"><svg class="a" style="left:2px;top:2px" width="7" height="7" viewBox="0 0 7 7"><path d="M0 2 L2.500 4.500 L7 0 V3 L2.500 7.500 L0 5 Z" fill="#000"/></svg></div>
</div>
<div class="cell" style="left:271px;top:284px;width:53px;height:21px;background:#f9f9f1;">
</div>
<div class="cell" style="left:324px;top:284px;width:54px;height:21px;background:#f9f9f1;">
</div>
<div class="cell" style="left:378px;top:284px;width:40px;height:21px;background:#f9f9f1;">
<div class="cb" style="left:13px;top:2px"></div>
</div>
<div class="cell" style="left:418px;top:284px;width:62px;height:21px;background:#f9f9f1;">
</div>
<div class="cell" style="left:480px;top:284px;width:64px;height:21px;background:#f9f9f1;">
</div>
<div class="cell" style="left:544px;top:284px;width:55px;height:21px;background:#f9f9f1;">
<div class="cb" style="left:20px;top:2px"></div>
</div>
<div class="cell" style="left:599px;top:284px;width:62px;height:21px;background:#f9f9f1;">
<div class="cb" style="left:24px;top:2px"></div>
</div>
<div class="cell" style="left:661px;top:284px;width:64px;height:21px;background:#f9f9f1;">
</div>
<div class="cell" style="left:725px;top:284px;width:64px;height:21px;background:#f9f9f1;">
</div>
<div class="cell" style="left:789px;top:284px;width:59px;height:21px;background:#f9f9f1;">
</div>
<div class="hdr" style="left:0;top:305px;width:35px;height:21px"><span style="text-align:left;left:3px;top:4px;letter-spacing:0.11px">14</span></div>
<div class="cell" style="left:35px;top:305px;width:66px;height:21px;background:#fbfbfb;">
</div>
<div class="cell" style="left:101px;top:305px;width:65px;height:21px;background:#fbfbfb;">
</div>
<div class="cell" style="left:166px;top:305px;width:57px;height:21px;background:#fbfbfb;">
</div>
<div class="cell" style="left:223px;top:305px;width:48px;height:21px;background:#fbfbfb;">
<div class="cb" style="left:16px;top:2px"><svg class="a" style="left:2px;top:2px" width="7" height="7" viewBox="0 0 7 7"><path d="M0 2 L2.500 4.500 L7 0 V3 L2.500 7.500 L0 5 Z" fill="#000"/></svg></div>
</div>
<div class="cell" style="left:271px;top:305px;width:53px;height:21px;background:#fbfbfb;">
</div>
<div class="cell" style="left:324px;top:305px;width:54px;height:21px;background:#fbfbfb;">
</div>
<div class="cell" style="left:378px;top:305px;width:40px;height:21px;background:#fbfbfb;">
<div class="cb" style="left:13px;top:2px"></div>
</div>
<div class="cell" style="left:418px;top:305px;width:62px;height:21px;background:#fbfbfb;">
</div>
<div class="cell" style="left:480px;top:305px;width:64px;height:21px;background:#fbfbfb;">
</div>
<div class="cell" style="left:544px;top:305px;width:55px;height:21px;background:#fbfbfb;">
<div class="cb" style="left:20px;top:2px"></div>
</div>
<div class="cell" style="left:599px;top:305px;width:62px;height:21px;background:#fbfbfb;">
<div class="cb" style="left:24px;top:2px"></div>
</div>
<div class="cell" style="left:661px;top:305px;width:64px;height:21px;background:#fbfbfb;">
</div>
<div class="cell" style="left:725px;top:305px;width:64px;height:21px;background:#fbfbfb;">
</div>
<div class="cell" style="left:789px;top:305px;width:59px;height:21px;background:#fbfbfb;">
</div>
<div class="hdr" style="left:0;top:326px;width:35px;height:21px"><span style="text-align:left;left:3px;top:4px;letter-spacing:0.11px">15</span></div>
<div class="cell" style="left:35px;top:326px;width:66px;height:21px;background:#f9f9f1;">
</div>
<div class="cell" style="left:101px;top:326px;width:65px;height:21px;background:#f9f9f1;">
</div>
<div class="cell" style="left:166px;top:326px;width:57px;height:21px;background:#f9f9f1;">
</div>
<div class="cell" style="left:223px;top:326px;width:48px;height:21px;background:#f9f9f1;">
<div class="cb" style="left:16px;top:2px"><svg class="a" style="left:2px;top:2px" width="7" height="7" viewBox="0 0 7 7"><path d="M0 2 L2.500 4.500 L7 0 V3 L2.500 7.500 L0 5 Z" fill="#000"/></svg></div>
</div>
<div class="cell" style="left:271px;top:326px;width:53px;height:21px;background:#f9f9f1;">
</div>
<div class="cell" style="left:324px;top:326px;width:54px;height:21px;background:#f9f9f1;">
</div>
<div class="cell" style="left:378px;top:326px;width:40px;height:21px;background:#f9f9f1;">
<div class="cb" style="left:13px;top:2px"></div>
</div>
<div class="cell" style="left:418px;top:326px;width:62px;height:21px;background:#f9f9f1;">
</div>
<div class="cell" style="left:480px;top:326px;width:64px;height:21px;background:#f9f9f1;">
</div>
<div class="cell" style="left:544px;top:326px;width:55px;height:21px;background:#f9f9f1;">
<div class="cb" style="left:20px;top:2px"></div>
</div>
<div class="cell" style="left:599px;top:326px;width:62px;height:21px;background:#f9f9f1;">
<div class="cb" style="left:24px;top:2px"></div>
</div>
<div class="cell" style="left:661px;top:326px;width:64px;height:21px;background:#f9f9f1;">
</div>
<div class="cell" style="left:725px;top:326px;width:64px;height:21px;background:#f9f9f1;">
</div>
<div class="cell" style="left:789px;top:326px;width:59px;height:21px;background:#f9f9f1;">
</div>
</div>
<div class="trk" style="left:993px;top:155px;width:16px;height:331px"></div>
<div class="sb" style="left:993px;top:155px;width:16px;height:16px"></div><svg class="a" style="left:997px;top:161px" width="7" height="4"><polygon points="0,4 7,4 3.5,0" fill="#000"/></svg>
<div class="sb" style="left:993px;top:171px;width:16px;height:16px"></div>
<div class="sb" style="left:993px;top:470px;width:16px;height:16px"></div><svg class="a" style="left:997px;top:476px" width="7" height="4"><polygon points="0,0 7,0 3.5,4" fill="#000"/></svg>
<div class="trk" style="left:156px;top:486px;width:837px;height:16px"></div>
<div class="sb" style="left:156px;top:486px;width:16px;height:16px"></div><svg class="a" style="left:161px;top:490px" width="4" height="7"><polygon points="4,0 4,7 0,3.5" fill="#000"/></svg>
<div class="sb" style="left:172px;top:486px;width:16px;height:16px"></div>
<div class="sb" style="left:977px;top:486px;width:16px;height:16px"></div><svg class="a" style="left:984px;top:490px" width="4" height="7"><polygon points="0,0 0,7 4,3.5" fill="#000"/></svg>
<div class="a" style="left:993px;top:486px;width:16px;height:16px;background:#d4d0c8"></div>
<div class="btn" style="left:730px;top:514px;width:91px;height:25px"></div>
<div class="btn" style="left:827px;top:514px;width:91px;height:25px"></div>
<div class="btn" style="left:924px;top:514px;width:91px;height:25px"></div>
<div class="t" style="left:773px;top:521px;letter-spacing:-0.07px;"><u>S</u>ave</div>
<div class="t" style="left:867px;top:521px;letter-spacing:-0.26px;"><u>C</u>ancel</div>
<div class="t" style="left:971px;top:521px;letter-spacing:-0.18px;"><u>E</u>xit</div>
<svg class="a" style="left:754px;top:520px" width="14" height="14" viewBox="0 0 14 14"><path d="M.5 .5 H13.500 V13.500 H1.500 L.5 12.500Z" fill="#7c7c20" stroke="#15150a"/><rect x="3" y="1" width="8" height="6" fill="#e4e2dc"/><rect x="3" y="1" width="8" height="1" fill="#fff"/><rect x="3" y="9" width="8" height="4.500" fill="#0c0c0c"/><rect x="8" y="10" width="2" height="3" fill="#e8e8e8"/></svg>
<svg class="a" style="left:847px;top:519px" width="15" height="16" viewBox="0 0 15 16"><path d="M1 2.500 L3.500 1 Q6 4 7.200 6 Q9.500 3 12.500 .8 L14 2.500 Q10.500 5.500 9 8 Q11 11 13.500 13.500 L11 15.200 Q9 12.500 7.200 10 Q5.500 12.500 3.200 15 L.8 13.200 Q3.500 10.500 5.500 7.800 Q3.500 5 1 2.500Z" fill="#a81414" stroke="#7c0c0c" stroke-width=".5"/></svg>
<svg class="a" style="left:951px;top:519px" width="17" height="16" viewBox="0 0 17 16"><path d="M2.500 .5 H12.500 V10.500 H5.500" fill="none" stroke="#000"/><path d="M1 .6 L5.500 3 V15 L1 12.200 Z" fill="#76843a" stroke="#1c2208" stroke-width="1"/><path d="M9.500 5.500 L12.500 2.300 V4.500 H16 V6.500 H12.500 V8.700 Z" fill="#0c0c78"/></svg>
<div class="a" style="left:4px;top:541px;width:1011px;height:2px;background:#fff"></div>
<div class="a" style="left:4px;top:543px;width:251px;height:18px;border:1px solid;border-color:#808080 #fff #fff #808080;background:#fbfaf5"></div>
<div class="a" style="left:257px;top:543px;width:147px;height:18px;border:1px solid;border-color:#808080 #fff #fff #808080;background:#fbfaf5"></div>
<div class="a" style="left:406px;top:543px;width:609px;height:18px;border:1px solid;border-color:#808080 #fff #fff #808080;background:#fbfaf5"></div>
<div class="a" style="left:999px;top:544px;width:15px;height:16px;background:#d4d0c8"></div>
<div class="t" style="left:8px;top:547px;letter-spacing:-0.22px;">Dataset name:  DMS</div>
<svg class="a" style="left:1000px;top:546px" width="14" height="14" viewBox="0 0 14 14"><path d="M13.500 2.500 L2.500 13.500 M13.500 6.500 L6.500 13.500 M13.500 10.500 L10.500 13.500" stroke="#808080" stroke-width="1.500"/><path d="M13.500 1.500 L1.500 13.500 M13.500 5.500 L5.500 13.500 M13.500 9.500 L9.500 13.500" stroke="#fff" stroke-width=".9"/></svg>
</div>
</body></html>
